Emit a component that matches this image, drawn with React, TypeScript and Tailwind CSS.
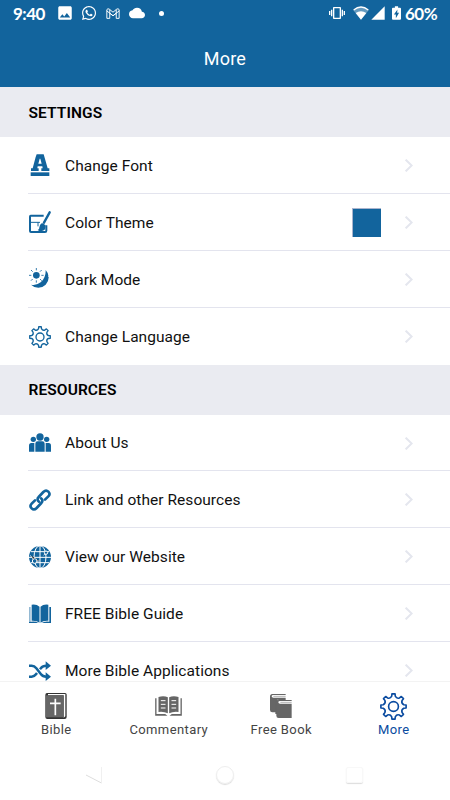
import React from "react";
import { FaWhatsapp } from "react-icons/fa";
import { MdCloud, MdImage, MdSignalCellular4Bar, MdVibration } from "react-icons/md";

// outline of an eight tooth gear, drawn in a 66 x 66 box
function gearPath() {
  const at = (r: number, deg: number) => {
    const a = ((deg - 90) * Math.PI) / 180;
    return `${(33 + r * Math.cos(a)).toFixed(1)} ${(33 + r * Math.sin(a)).toFixed(1)}`;
  };
  let d = `M${at(31, -7)}`;
  for (let i = 0; i < 8; i++) {
    const t = i * 45;
    d += `L${at(31, t + 7)}L${at(25.5, t + 10)}Q${at(20, t + 22.5)} ${at(25.5, t + 35)}L${at(31, t + 38)}`;
  }
  return d + "Z";
}

function GearIcon({ className = "w-[22px] h-[22px]" }) {
  return (
    <svg viewBox="0 0 66 66" className={className} fill="none" stroke="currentColor" strokeWidth="4" strokeLinejoin="round">
      <path d={gearPath()} />
      <circle cx="33" cy="33" r="12" />
    </svg>
  );
}

function FontIcon() {
  return (
    <svg viewBox="0 0 66 66" className="w-[22px] h-[22px]" fill="currentColor">
      <path fillRule="evenodd" d="M23 1H44L56 43H61V51H37V43H41L40 37H26L25 43H29V51H6V43H11L20 9ZM32 14L28 29H38L34 14Z" />
      <path d="M5 55H61V66H5Z" />
    </svg>
  );
}

function ThemeIcon() {
  return (
    <svg viewBox="0 0 66 66" className="w-[22px] h-[22px]" fill="none" stroke="currentColor">
      <path strokeWidth="6" strokeLinejoin="round" d="M44 14H5Q3 14 3 17V60Q3 63 6 63H48Q52 63 52 59V43" />
      <path strokeWidth="3" d="M3 34H33M27 34V46" />
      <path strokeWidth="7" strokeLinecap="round" d="M62 4L45 35" />
      <path fill="currentColor" stroke="none" d="M39 36L49 42Q52 58 39 60Q32 62 26 57Q32 56 31 49Q32 40 39 36Z" />
    </svg>
  );
}

function DarkIcon() {
  return (
    <svg viewBox="0 0 66 66" className="w-[22px] h-[22px]" fill="currentColor">
      <path d="M50 6A31 31 0 1 1 6 50Q21 54 35 43Q51 29 50 6Z" />
      <circle cx="22" cy="22" r="10" />
      <path fill="none" stroke="currentColor" strokeWidth="2.5" d="M22 0V7M22 37V44M0 22H7M37 22H44M6 6L11 11M33 33L38 38M6 38L11 33M33 11L38 6" />
      <path fill="none" stroke="white" strokeWidth="2" d="M57 25H66M59 41L55 49" />
    </svg>
  );
}

function PeopleIcon() {
  return (
    <svg viewBox="0 0 66 66" className="w-[22px] h-[22px]" fill="currentColor">
      <circle cx="33" cy="15" r="11" />
      <circle cx="13" cy="22" r="8" />
      <circle cx="53" cy="22" r="8" />
      <path d="M19 59V35Q19 28 26 28H40Q47 28 47 35V59Z" />
      <path d="M0 59V41Q0 33 7 33H16V59ZM66 59V41Q66 33 59 33H50V59Z" />
    </svg>
  );
}

function LinkIcon() {
  return (
    <svg viewBox="0 0 66 66" className="w-[22px] h-[22px]" fill="none" stroke="currentColor" strokeWidth="8" strokeLinecap="round">
      <path d="M30 38Q22 31 29 24L43 9Q51 1 58 8Q65 15 58 22L48 32" />
      <path d="M36 28Q44 35 37 42L23 57Q15 65 8 58Q1 51 8 44L18 34" />
    </svg>
  );
}

function GlobeIcon() {
  return (
    <svg viewBox="0 0 66 66" className="w-[22px] h-[22px]">
      <circle cx="33" cy="33" r="33" fill="currentColor" />
      <g fill="none" stroke="white" strokeWidth="3">
        <path d="M33 0V66M0 34H66M6 17H60M6 50H60" />
        <ellipse cx="33" cy="33" rx="18" ry="34" />
      </g>
      <path stroke="white" strokeWidth="2.5" d="M4 28L17 45L31 45M44 28L51 20" />
      <g fill="currentColor" stroke="white" strokeWidth="3">
        <circle cx="17" cy="45" r="7" />
        <circle cx="51" cy="20" r="5" />
      </g>
    </svg>
  );
}

function GuideIcon() {
  return (
    <svg viewBox="0 0 66 66" className="w-[22px] h-[22px]" fill="currentColor">
      <path d="M8 5Q23 3 31.5 11V59Q23 52 8 53ZM58 5Q43 3 34.5 11V59Q43 52 58 53Z" />
      <path opacity=".45" d="M0 12H5V58H0Z" />
      <path d="M61 12H66V60H38Q46 54 61 56ZM0 57Q19 53 28 60H0Z" />
    </svg>
  );
}

function ShuffleIcon() {
  return (
    <svg viewBox="0 0 66 66" className="w-[22px] h-[22px]" fill="none" stroke="currentColor" strokeWidth="7.5">
      <path d="M0 17H8Q16 17 22 25L36 43Q41 50 52 50" />
      <path d="M0 50H8Q16 50 21 43L24 39M33 28L36 24Q41 17 52 17" />
      <path fill="currentColor" stroke="none" d="M50 4L66 17L50 30ZM50 37L66 50L50 63Z" />
    </svg>
  );
}

function BibleIcon() {
  return (
    <svg viewBox="0 0 66 78" className="w-[22px] h-[26px]">
      <path fill="#333" d="M6 0H60Q65 0 65 5V72Q65 78 59 78H7Q1 78 1 72V6Q1 0 6 0Z" />
      <path fill="#fff" d="M9 3H61V70L56 74V7H9Z" />
      <path fill="#666" d="M3 7H56V73H3Z" />
      <path stroke="#fff" strokeWidth="5" d="M31 17V67M15 31H47" />
    </svg>
  );
}

function CommentaryIcon() {
  return (
    <svg viewBox="0 0 80 60" className="w-[27px] h-5" fill="#666">
      <path d="M10 3Q26-2 38 4V52Q26 46 10 48ZM70 3Q54-2 42 4V52Q54 46 70 48Z" />
      <path d="M0 7H4V54H30L37 59H0ZM80 7H76V54H50L43 59H80Z" />
      <path stroke="#fff" strokeWidth="3" d="M17 14H31M17 25H31M17 36H31M49 14H63M49 25H63M49 36H63" />
    </svg>
  );
}

function BooksIcon() {
  return (
    <svg viewBox="0 0 66 72" className="w-[22px] h-6" fill="#666">
      <path d="M7 0H47V3H10Q5 3 5 7T10 11H47V15H27Q20 15 18 22H22V55H7Q0 55 0 48V8Q0 0 7 0Z" />
      <path stroke="#666" strokeWidth="1.5" d="M10 7H47M31 25H65" />
      <path d="M27 15H47V19H27Q21 19 21 26V60H16V20Q18 15 27 15Z" />
      <path d="M27 18H65V21H30Q25 21 25 25T30 29H65V72H26Q19 72 19 65V25Q19 18 27 18Z" />
    </svg>
  );
}

function StatusBar() {
  return (
    <div className="relative h-7 text-white font-['Lato',sans-serif] font-bold">
      <span className="absolute left-[13px] top-[3px] text-[17px] leading-[22px] tracking-[-0.5px]">9:40</span>
      <MdImage className="absolute left-[56px] top-[4px] w-[18px] h-[18px]" />
      <FaWhatsapp className="absolute left-[81px] top-[5px] w-4 h-4" />
      <svg viewBox="0 0 42 34" className="absolute left-[106px] top-[8px] w-[14px] h-[11px]" fill="none" stroke="currentColor" strokeWidth="3" strokeLinejoin="round">
        <path d="M2 32V5Q5 0 10 4L21 13L32 4Q37 0 40 5V32H31V16L21 24L11 16V32ZM2 9L21 24L40 9M11 5V16M31 5V16" />
      </svg>
      <MdCloud className="absolute left-[129px] top-[5px] w-4 h-4" />
      <span className="absolute left-[159px] top-[11px] w-[5px] h-[5px] rounded-full bg-white" />
      <MdVibration className="absolute left-[329px] top-[5px] w-4 h-4" />
      <svg viewBox="0 0 48 40" className="absolute left-[353px] top-[6px] w-4 h-[14px]">
        <path fill="currentColor" fillOpacity=".35" d="M1 12Q24-10 47 12L24 40Z" />
        <path fill="currentColor" d="M8 20Q24 10 40 20L24 40Z" />
        <path fill="none" stroke="currentColor" strokeWidth="4" d="M2 11Q24-7 46 11" />
      </svg>
      <MdSignalCellular4Bar className="absolute left-[370px] top-[5px] w-4 h-4" />
      <svg viewBox="0 0 28 42" className="absolute left-[392px] top-[6px] w-[9px] h-[14px]">
        <path fill="currentColor" d="M9 0H19V5H25Q28 5 28 8V39Q28 42 25 42H3Q0 42 0 39V8Q0 5 3 5H9Z" />
        <path fill="#12649d" d="M17 10L6 26H12V37L22 20H16Z" />
      </svg>
      <span className="absolute left-[405px] top-[3px] text-[17px] leading-[22px] tracking-[-0.5px]">60%</span>
    </div>
  );
}

function Heading({ children }: { children: React.ReactNode }) {
  return (
    <h2 className="h-[50px] shrink-0 bg-[#eaebf1] pl-[28.5px] pt-[3px] flex items-center text-[15.5px] font-semibold tracking-[0.1px] text-black">
      {children}
    </h2>
  );
}

function Row({ icon, label, swatch, last }: { icon: React.ReactNode; label: string; swatch?: boolean; last?: boolean }) {
  return (
    <div className={`ml-[28px] h-[56.9px] shrink-0 pt-px flex items-center ${last ? "" : "border-b border-[#e3e4ee]"}`}>
      <span className="w-[22px] ml-[0.5px] mr-[14.5px] text-[#12649d] flex justify-center">{icon}</span>
      <span className="flex-1 pt-[2px] text-[15.5px] tracking-[0.05px] text-[#111]">{label}</span>
      {swatch && <span className="w-[29px] h-[29px] mr-[24px] bg-[#12649d] border-t border-l border-t-[#a9b4ce] border-l-[#a9b4ce]" />}
      <svg viewBox="0 0 24 39" className="w-2 h-[13px] mr-[37px]" fill="none" stroke="#e4e6ee" strokeWidth="6">
        <path d="M2 2L20 19.5L2 37" />
      </svg>
    </div>
  );
}

function Tab({ icon, label, active }: { icon: React.ReactNode; label: string; active?: boolean }) {
  return (
    <div className={`flex-1 flex flex-col items-center ${active ? "text-[#0a4ba0]" : "text-[#444]"}`}>
      <span className="h-[28px] flex items-center">{icon}</span>
      <span className="text-[13px] leading-5 tracking-[0.4px] whitespace-nowrap">{label}</span>
    </div>
  );
}

export default function App() {
  return (
    <div className="w-[450px] h-[800px] overflow-hidden flex flex-col bg-white font-['Roboto',sans-serif]">
      <header className="h-[87px] shrink-0 bg-[#12649d]">
        <StatusBar />
        <h1 className="h-[59px] flex items-center justify-center pt-[2px] text-[18px] tracking-[0.2px] text-white">More</h1>
      </header>

      <main className="h-[594px] shrink-0 overflow-hidden flex flex-col">
        <Heading>SETTINGS</Heading>
        <Row icon={<FontIcon />} label="Change Font" />
        <Row icon={<ThemeIcon />} label="Color Theme" swatch />
        <Row icon={<DarkIcon />} label="Dark Mode" />
        <Row icon={<GearIcon />} label="Change Language" last />
        <Heading>RESOURCES</Heading>
        <Row icon={<PeopleIcon />} label="About Us" />
        <Row icon={<LinkIcon />} label="Link and other Resources" />
        <Row icon={<GlobeIcon />} label="View our Website" />
        <Row icon={<GuideIcon />} label="FREE Bible Guide" />
        <Row icon={<ShuffleIcon />} label="More Bible Applications" />
      </main>

      <nav className="h-[69px] shrink-0 border-t border-[#f3f3f3] pt-[10px] flex">
        <Tab icon={<BibleIcon />} label="Bible" />
        <Tab icon={<CommentaryIcon />} label="Commentary" />
        <Tab icon={<BooksIcon />} label="Free Book" />
        <Tab icon={<GearIcon className="w-[27px] h-[27px]" />} label="More" active />
      </nav>

      <div className="flex-1 flex justify-between items-center pl-[86px] pr-[87px]">
        <svg viewBox="0 0 16 18" className="w-4 h-[18px]" fill="none" stroke="#ddd">
          <path d="M0 9L15.500 17" />
          <path d="M15.500 1V17" stroke="#f0f0f0" />
        </svg>
        <span className="w-[18px] h-[18px] ml-px rounded-full border border-[#eee] shadow-[0_1px_1px_#ddd]" />
        <span className="w-[17px] h-4 rounded-[2px] border border-[#f8f8f8] shadow-[0_1px_1px_#ddd]" />
      </div>
    </div>
  );
}
